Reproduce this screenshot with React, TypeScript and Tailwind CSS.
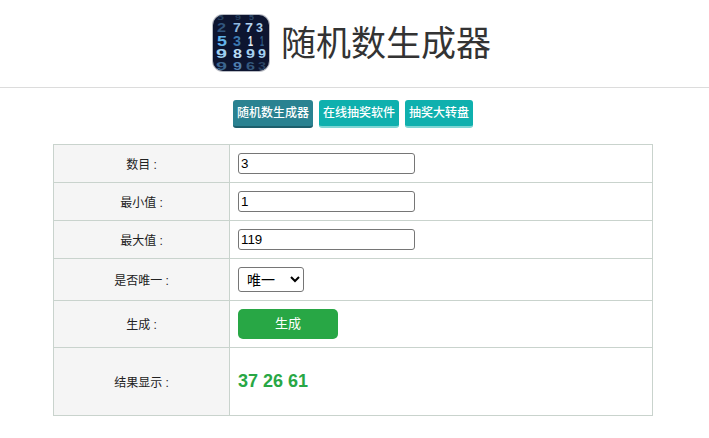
const FONT = 'font-["Liberation_Sans","Noto_Sans_CJK_SC",sans-serif]'

const tabs = [
  { name: '随机数生成器', active: true },
  { name: '在线抽奖软件', active: false },
  { name: '抽奖大转盘', active: false },
]

// logo digits: [x, baseline, width, text, colour, font size]
const digits: [number, number, number, string, string, number][] = [
  [4, 5, 7, '5', '#24405f', 7],
  [22, 5, 6, '9', '#24405f', 7],
  [36, 5, 5, '5', '#2c4a6c', 7],
  [4, 17, 9, '2', '#31557e', 12],
  [20, 17, 8, '7', '#8fb6de', 12],
  [32, 17, 8, '7', '#b5d5f2', 12],
  [43, 17, 7, '3', '#a8cdec', 12],
  [4, 31, 10, '5', '#62b4ea', 15],
  [20, 31, 8, '3', '#3b77ae', 15],
  [35, 31, 5, '1', '#e6f3fb', 15],
  [47, 31, 4, '1', '#2f5d88', 15],
  [3, 43, 11, '9', '#9fd0f0', 13],
  [20, 43, 9, '8', '#b9dcf4', 13],
  [33, 43, 9, '9', '#a6d2f0', 13],
  [45, 43, 8, '9', '#a6d2f0', 13],
  [3, 55, 11, '9', '#3c6690', 11],
  [20, 55, 9, '9', '#4f7fb0', 11],
  [33, 55, 9, '6', '#34587e', 11],
  [45, 55, 8, '3', '#2a4464', 11],
]

function Logo() {
  return (
    <svg width="58" height="58" viewBox="0 0 58 58" className="shrink-0 block">
      <defs>
        <clipPath id="logo-clip">
          <rect x="1" y="1" width="56" height="56" rx="10" />
        </clipPath>
      </defs>
      <rect x="0" y="0" width="58" height="58" rx="11" fill="#8a8f9c" opacity="0.6" />
      <g clipPath="url(#logo-clip)">
        <rect x="1" y="1" width="56" height="56" fill="#0d1530" />
        {digits.map(([x, y, w, text, color, size]) => (
          <text
            key={`${x}-${y}`}
            x={x + 1}
            y={y + 1}
            fill={color}
            fontSize={size}
            fontWeight="700"
            fontFamily="Liberation Sans, sans-serif"
            textLength={w}
            lengthAdjust="spacingAndGlyphs"
          >
            {text}
          </text>
        ))}
      </g>
    </svg>
  )
}

function Row({ label, h, children }: { label: string; h: string; children: React.ReactNode }) {
  return (
    <div className={`flex border-b border-[#c9d3cd] last:border-b-0 ${h}`}>
      <div className="w-[176px] shrink-0 bg-[#f5f5f5] border-r border-[#c9d3cd] flex items-center justify-center pt-[2px] text-xs text-[#222]">
        {label}
      </div>
      <div className="flex-1 flex items-center pl-2">{children}</div>
    </div>
  )
}

function NumInput({ value }: { value: string }) {
  return (
    <input
      readOnly
      value={value}
      className="w-[177px] h-[21px] border border-[#767676] rounded-[3px] px-[2px] text-[13.33px] text-black bg-white outline-none"
    />
  )
}

export default function App() {
  return (
    <div className={`w-[709px] h-[438px] overflow-hidden bg-white ${FONT}`}>
      {/* Header */}
      <div className="h-[88px] border-b border-[#dcdcdc] flex items-center justify-center gap-[11px] pb-[2px] pr-[6px]">
        <Logo />
        <h1 className="text-[35px] font-normal text-[#333] leading-none pt-[2px]">随机数生成器</h1>
      </div>

      {/* Tabs */}
      <div className="flex justify-center gap-[6px] mt-3 pr-[3px]">
        {tabs.map((tab) => (
          <div
            key={tab.name}
            className={`h-[28px] px-1 flex items-center rounded-[3px] text-xs font-medium text-white ${
              tab.active
                ? 'bg-[#2a8291] border-b-2 border-[#1d5f6c]'
                : 'bg-[#0fb0ae] border-b-2 border-[#7fd6d4]'
            }`}
          >
            {tab.name}
          </div>
        ))}
      </div>

      {/* Form table */}
      <div className="w-[600px] ml-[53px] mt-[16px] border border-[#c9d3cd]">
        <Row label="数目 :" h="h-[38px]">
          <NumInput value="3" />
        </Row>
        <Row label="最小值 :" h="h-[38px]">
          <NumInput value="1" />
        </Row>
        <Row label="最大值 :" h="h-[38px]">
          <NumInput value="119" />
        </Row>
        <Row label="是否唯一 :" h="h-[42px]">
          <select className="w-[66px] h-[25px] border border-[#767676] rounded-[3px] pl-[4px] text-sm text-black bg-white">
            <option>唯一</option>
          </select>
        </Row>
        <Row label="生成 :" h="h-[47px]">
          <button className="w-[100px] h-[30px] rounded-[5px] bg-[#28a745] text-white text-[13px] font-normal">
            生成
          </button>
        </Row>
        <Row label="结果显示 :" h="h-[67px]">
          <span className="text-lg font-bold text-[#28a745] -mt-[2px]">37 26 61</span>
        </Row>
      </div>
    </div>
  )
}
